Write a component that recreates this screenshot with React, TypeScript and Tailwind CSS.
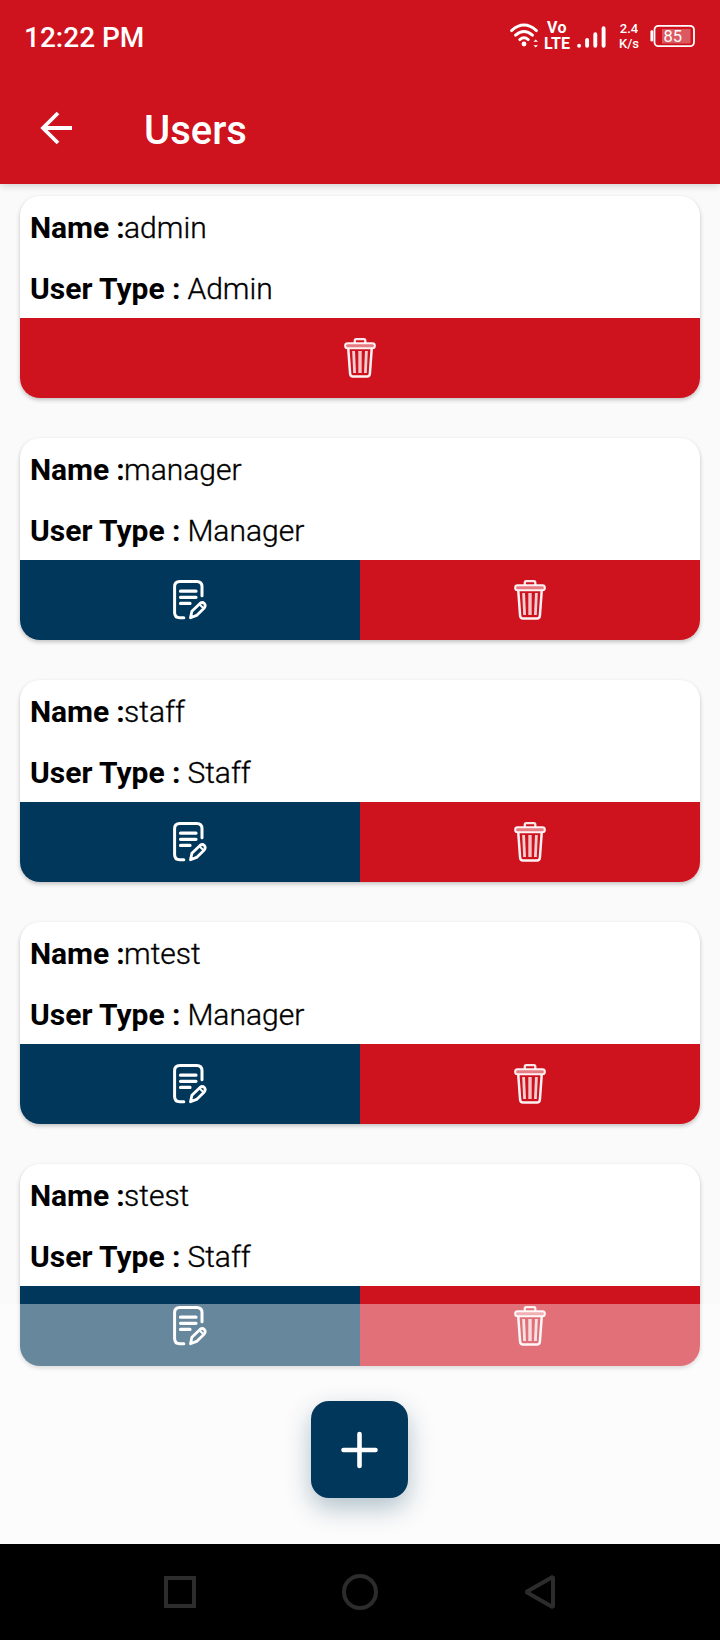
type User = { name: string; type: string; editable: boolean };

const users: User[] = [
  { name: "admin", type: "Admin", editable: false },
  { name: "manager", type: "Manager", editable: true },
  { name: "staff", type: "Staff", editable: true },
  { name: "mtest", type: "Manager", editable: true },
  { name: "stest", type: "Staff", editable: true },
];

function TrashIcon() {
  return (
    <svg width="32" height="40" viewBox="0 0 32 40" fill="none" stroke="#fff" strokeLinejoin="round">
      <path d="M10.8 5V2.6Q10.8 1.2 12.2 1.2H20Q21.3 1.2 21.3 2.6V5" strokeWidth="2.3" opacity="0.9" />
      <rect x="1.2" y="5.3" width="29.6" height="4.9" rx="2.3" strokeWidth="2" fill="#ea8088" opacity="0.95" />
      <path d="M4.3 11L6.1 35.6Q6.4 38.6 9 38.6H23Q25.6 38.6 25.9 35.6L27.7 11" strokeWidth="2.5" opacity="0.95" />
      <path d="M9.6 13L10.6 35M22.4 13L21.4 35" strokeWidth="2.8" opacity="0.8" />
      <path d="M16 13V35" strokeWidth="3.4" opacity="0.75" />
    </svg>
  );
}

function EditIcon() {
  return (
    <svg width="34" height="40" viewBox="0 0 34 40" fill="none" stroke="#fff" strokeLinecap="round" strokeLinejoin="round">
      <path d="M10.8 37.8H6.8Q1.6 37.8 1.6 32.6V6.8Q1.6 1.6 6.8 1.6H23.8Q29 1.6 29 6.8V15.8" strokeWidth="3" />
      <path d="M7.5 11.2H23M7.5 17.3H23M7.5 23.4H17" strokeWidth="3.2" />
      <path d="M17.5 37.8L18.9 31.2L27 23.4Q29.4 21.6 31.3 23.4Q33.1 25.5 31.3 27.9L23.6 35.4Z" strokeWidth="2.8" />
      <path d="M27.2 25L30.2 28" strokeWidth="2" />
    </svg>
  );
}

function StatusBar() {
  return (
    <div className="flex h-[74px] justify-between pl-6 pr-6">
      <span className="pt-[20px] text-[28px] leading-[35px] font-medium">12:22 PM</span>
      <div className="flex pt-[20px]">
        <svg width="34" height="30" viewBox="0 0 34 30" fill="none" stroke="#fff" strokeWidth="2.9" strokeLinecap="round">
          <path d="M1.6 10.6Q14 -0.4 26.4 10.6M5.6 15.2Q14 7.8 22.4 15.2M9.8 19.6Q14 15.9 18.2 19.6" />
          <circle cx="14" cy="24" r="2.4" fill="#fff" stroke="none" />
          <path d="M23.4 21.8L25.7 19.5L28 21.8ZM23.4 25.2L25.7 27.5L28 25.2Z" fill="#fff" stroke="none" />
        </svg>
        <div className="flex w-[26px] flex-col items-center text-[16px] leading-[16px] font-bold">
          <span className="tracking-[0.5px]">Vo</span>
          <span>LTE</span>
        </div>
        <svg className="ml-[7px]" width="30" height="30" viewBox="0 0 30 30" fill="none" stroke="#fff" strokeWidth="3.9" strokeLinecap="round">
          <path d="M2.1 25.7V25.8M10.1 20V25.8M18.3 14.2V25.8M26.6 8.2V25.8" />
        </svg>
        <div className="ml-[11px] flex w-[22px] flex-col items-center pt-px text-[13px] leading-[15px] font-medium">
          <span>2.4</span>
          <span>K/s</span>
        </div>
        <svg className="ml-[10px] mt-[3px]" width="46" height="24" viewBox="0 0 46 24">
          <rect x="4.5" y="2.8" width="39.5" height="20.4" rx="4" fill="none" stroke="#fff" strokeWidth="1.8" />
          <path d="M1.8 8.6V17.2" stroke="#fff" strokeWidth="2.8" strokeLinecap="round" />
          <rect x="12" y="6" width="28.5" height="14.5" fill="#fff" opacity="0.3" />
          <text x="13.4" y="19" fill="#fff" fontSize="16.5" fontWeight="400">85</text>
        </svg>
      </div>
    </div>
  );
}

function UserCard({ user }: { user: User }) {
  return (
    <article className="flex h-[202px] shrink-0 flex-col overflow-hidden rounded-[20px] bg-white shadow-[0_2px_4px_rgba(0,0,0,0.23)]">
      <div className="flex h-[122px] flex-col pl-[10px] text-[30px] leading-[36px] font-light text-black [-webkit-text-stroke:0.35px_black]">
        <p className="pt-[14px]"><b className="mr-[-0.7px] font-bold tracking-[-0.1px] [-webkit-text-stroke:0]">Name :</b>{user.name}</p>
        <p className="pt-[25px]"><b className="mr-[-0.5px] font-bold [-webkit-text-stroke:0]">User Type :</b> {user.type}</p>
      </div>
      <div className="flex h-20">
        {user.editable && (
          <button className="flex flex-1 items-center justify-center bg-[#00375a]" aria-label="Edit"><EditIcon /></button>
        )}
        <button className="flex flex-1 items-center justify-center bg-[#ce121e]" aria-label="Delete"><TrashIcon /></button>
      </div>
    </article>
  );
}

export default function App() {
  return (
    <div className="flex h-[1640px] w-[720px] flex-col overflow-hidden bg-[#fafafa] font-[Roboto,sans-serif]">
      <header className="relative h-[184px] shrink-0 bg-[#ce121e] text-white shadow-[0_1px_8px_rgba(0,0,0,0.2)]">
        <StatusBar />
        <div className="flex h-[110px] pl-[40px]">
          <svg className="mt-[37px]" width="33" height="34" viewBox="0 0 33 34" fill="none" stroke="#fff" strokeWidth="3.8">
            <path d="M32 17H3M18 2L3 17L18 32" />
          </svg>
          <h1 className="ml-[71px] pt-[34px] text-[40px] leading-[46px] font-medium">Users</h1>
        </div>
      </header>
      <main className="relative flex h-[1360px] shrink-0 flex-col gap-10 px-5 pt-3">
        {users.map((user) => <UserCard key={user.name} user={user} />)}
        <div className="absolute inset-x-0 bottom-0 flex h-60 justify-center bg-white/40 pt-[97px]">
          <button aria-label="Add user" className="mr-px flex h-[97px] w-[97px] items-center justify-center rounded-[18px] bg-[#00375a] shadow-[0_10px_26px_rgba(0,55,90,0.3)]">
            <svg width="38" height="38" viewBox="0 0 38 38" stroke="#fff" strokeWidth="4.6" strokeLinecap="round">
              <path d="M18.5 3V35M2.5 19H34.5" />
            </svg>
          </button>
        </div>
      </main>
      <nav className="flex h-24 shrink-0 items-center justify-center gap-[144px] bg-black">
        <svg width="36" height="36" viewBox="0 0 36 36" fill="none" stroke="#2c2c2c" strokeWidth="4"><rect x="4" y="4" width="28" height="28" /></svg>
        <svg width="36" height="36" viewBox="0 0 36 36" fill="none" stroke="#2c2c2c" strokeWidth="4"><circle cx="18" cy="18" r="16" /></svg>
        <svg width="36" height="36" viewBox="0 0 36 36" fill="none" stroke="#2c2c2c" strokeWidth="4" strokeLinejoin="bevel"><path d="M31 2.8V33.2L4.2 18Z" /></svg>
      </nav>
    </div>
  );
}
